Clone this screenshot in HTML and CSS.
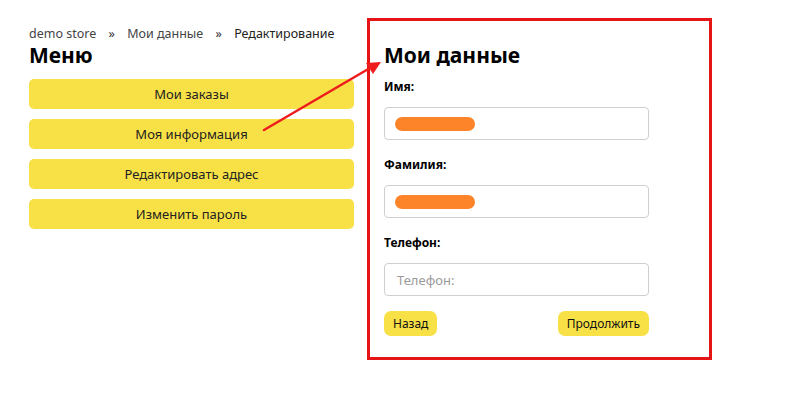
FILE: index.html
```html
<!DOCTYPE html>
<html lang="ru">
<head>
<meta charset="utf-8">
<title>Мои данные</title>
<link rel="stylesheet" href="styles.css">
</head>
<body>
<div class="page">
  <div class="sidebar">
    <div class="crumbs">
      <a class="crumb-link">demo store</a>
      <span class="sep">»</span>
      <a class="crumb-link">Мои данные</a>
      <span class="sep">»</span>
      <span class="crumb-current">Редактирование</span>
    </div>
    <h2 class="menu-title">Меню</h2>
    <nav class="menu">
      <a class="menu-item">Мои заказы</a>
      <a class="menu-item">Моя информация</a>
      <a class="menu-item">Редактировать адрес</a>
      <a class="menu-item">Изменить пароль</a>
    </nav>
  </div>
  <div class="panel">
    <h1 class="panel-title">Мои данные</h1>
    <div class="field">
      <label class="field-label">Имя:</label>
      <div class="input"><span class="redact"></span></div>
    </div>
    <div class="field">
      <label class="field-label">Фамилия:</label>
      <div class="input"><span class="redact"></span></div>
    </div>
    <div class="field">
      <label class="field-label">Телефон:</label>
      <div class="input"><span class="placeholder">Телефон:</span></div>
    </div>
    <div class="actions">
      <a class="btn">Назад</a>
      <a class="btn">Продолжить</a>
    </div>
  </div>
  <svg class="arrow" width="801" height="403" viewBox="0 0 801 403">
    <line x1="264" y1="130" x2="370" y2="68" stroke="#ee1c1c" stroke-width="2.5" stroke-linecap="round"/>
    <polygon points="381,62 366,63 373,74" fill="#ee1c1c"/>
  </svg>
</div>
</body>
</html>
```

FILE: styles.css
```css
* { box-sizing: border-box; }
html, body { margin: 0; padding: 0; background: #fff; }
body {
  font-family: "Noto Sans", "Open Sans", sans-serif;
  color: #111;
  width: 801px;
  height: 403px;
  overflow: hidden;
}
.page {
  position: relative;
  display: flex;
  align-items: flex-start;
  gap: 13px;
  padding: 18px 0 0 29px;
}
.sidebar {
  width: 325px;
  padding-top: 7px;
}
.crumbs {
  font-size: 12.5px;
  line-height: 18px;
  color: #333;
  white-space: nowrap;
}
.crumb-link { color: #444; }
.sep { margin: 0 9px; color: #333; }
.crumb-current { color: #222; }
.menu-title {
  margin: 0;
  font-size: 21px;
  line-height: 24px;
  font-weight: 700;
  color: #000;
}
.menu {
  margin-top: 12px;
  display: flex;
  flex-direction: column;
  gap: 10px;
}
.menu-item {
  display: flex;
  align-items: center;
  justify-content: center;
  height: 30px;
  background: #f8e146;
  border-radius: 5px;
  font-size: 13px;
  color: #222;
}
.panel {
  width: 345px;
  height: 342px;
  border: 3px solid #e61414;
  padding: 20px 14px 0 14px;
}
.panel-title {
  margin: 0;
  font-size: 21px;
  line-height: 28px;
  font-weight: 700;
  color: #000;
}
.field { width: 265px; }
.field-label {
  display: block;
  margin-top: 10px;
  font-size: 12px;
  line-height: 16px;
  font-weight: 700;
  color: #000;
}
.field + .field .field-label { margin-top: 17px; }
.input {
  margin-top: 12px;
  height: 33px;
  border: 1px solid #cfcfcf;
  border-radius: 4px;
  display: flex;
  align-items: center;
  padding-left: 12px;
}
.redact {
  display: block;
  width: 80px;
  height: 14px;
  border-radius: 7px;
  background: #fe8429;
  margin-left: -2px;
}
.placeholder {
  font-size: 13px;
  color: #9a9a9a;
}
.actions {
  width: 265px;
  margin-top: 15px;
  display: flex;
  justify-content: space-between;
}
.btn {
  display: flex;
  align-items: center;
  height: 25px;
  padding: 0 9px;
  background: #f8e146;
  border-radius: 7px;
  font-size: 12px;
  color: #111;
}
.arrow {
  position: absolute;
  left: 0;
  top: 0;
  pointer-events: none;
}
```
